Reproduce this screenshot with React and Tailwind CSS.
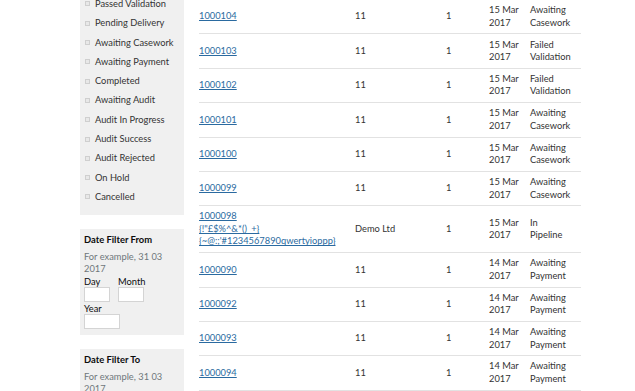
import React from 'react';

const statuses = [
  'Failed Validation',
  'Passed Validation',
  'Pending Delivery',
  'Awaiting Casework',
  'Awaiting Payment',
  'Completed',
  'Awaiting Audit',
  'Audit In Progress',
  'Audit Success',
  'Audit Rejected',
  'On Hold',
  'Cancelled',
];

const rows = [
  { id: ['1000104'], org: '11', qty: '1', date: ['15 Mar', '2017'], status: ['Awaiting', 'Casework'] },
  { id: ['1000103'], org: '11', qty: '1', date: ['15 Mar', '2017'], status: ['Failed', 'Validation'] },
  { id: ['1000102'], org: '11', qty: '1', date: ['15 Mar', '2017'], status: ['Failed', 'Validation'] },
  { id: ['1000101'], org: '11', qty: '1', date: ['15 Mar', '2017'], status: ['Awaiting', 'Casework'] },
  { id: ['1000100'], org: '11', qty: '1', date: ['15 Mar', '2017'], status: ['Awaiting', 'Casework'] },
  { id: ['1000099'], org: '11', qty: '1', date: ['15 Mar', '2017'], status: ['Awaiting', 'Casework'] },
  {
    id: ['1000098', '{!"£$%^&*()_+}', "{~@:;'#1234567890qwertyioppp}"],
    org: 'Demo Ltd',
    qty: '1',
    date: ['15 Mar', '2017'],
    status: ['In', 'Pipeline'],
  },
  { id: ['1000090'], org: '11', qty: '1', date: ['14 Mar', '2017'], status: ['Awaiting', 'Payment'] },
  { id: ['1000092'], org: '11', qty: '1', date: ['14 Mar', '2017'], status: ['Awaiting', 'Payment'] },
  { id: ['1000093'], org: '11', qty: '1', date: ['14 Mar', '2017'], status: ['Awaiting', 'Payment'] },
  { id: ['1000094'], org: '11', qty: '1', date: ['14 Mar', '2017'], status: ['Awaiting', 'Payment'] },
];

const Lines = ({ lines }) =>
  lines.map((l, i) => (
    <span key={i} className="block">
      {l}
    </span>
  ));

const DateFilter = ({ title }) => (
  <div className="bg-[#f0f0f0] px-[4px] pt-[4px] pb-[6px]">
    <h3 className="font-bold text-[9.4px] leading-[13px] text-[#0b0c0c] mb-[5px]">{title}</h3>
    <p className="text-[9.3px] leading-[12.5px] text-[#6f777b]">
      For example, 31 03
      <br />
      2017
    </p>
    <div className="flex gap-[8px]">
      <label className="flex flex-col">
        <span className="text-[9.3px] leading-[11px] text-[#0b0c0c]">Day</span>
        <span className="block w-[26px] h-[15px] bg-white border border-[#d4d4d4]" />
      </label>
      <label className="flex flex-col">
        <span className="text-[9.3px] leading-[11px] text-[#0b0c0c]">Month</span>
        <span className="block w-[26px] h-[15px] bg-white border border-[#d4d4d4]" />
      </label>
    </div>
    <label className="flex flex-col mt-[1px]">
      <span className="text-[9.3px] leading-[11px] text-[#0b0c0c]">Year</span>
      <span className="block w-[36px] h-[15px] bg-white border border-[#d4d4d4]" />
    </label>
  </div>
);

export default function App() {
  return (
    <div
      className="h-[391px] overflow-hidden bg-white text-[#0b0c0c]"
      style={{ fontFamily: 'Lato, "Noto Sans", sans-serif' }}
    >
      <div className="flex items-start gap-[15px] pl-[80px]">
        {/* Filters */}
        <aside className="w-[104px] shrink-0 flex flex-col gap-[14px] mt-[-25px]">
          <ul className="bg-[#f0f0f0] pb-[8px]">
            {statuses.map((s) => (
              <li key={s} className="flex items-center h-[19.3px] pl-[5px]">
                <span className="w-[5px] h-[5px] border border-[#cfcfcf] bg-[#e8e8e8] mr-[5px]" />
                <span className="text-[9.3px] whitespace-nowrap text-[#333]">{s}</span>
              </li>
            ))}
          </ul>
          <DateFilter title="Date Filter From" />
          <DateFilter title="Date Filter To" />
        </aside>

        {/* Results */}
        <table className="table-fixed w-[382px] border-collapse text-[9.3px] leading-[12.5px]">
          <colgroup>
            <col className="w-[156px]" />
            <col className="w-[91px]" />
            <col className="w-[43px]" />
            <col className="w-[41px]" />
            <col className="w-[51px]" />
          </colgroup>
          <tbody>
            {rows.map((r) => (
              <tr key={r.id[0]} className="border-b border-[#e2e2e2]">
                <td className="py-[4.2px] align-middle">
                  <a href="#" className="block text-[#2a6aa0] underline">
                    <Lines lines={r.id} />
                  </a>
                </td>
                <td className="py-[4.2px] align-middle text-[#333]">{r.org}</td>
                <td className="py-[4.2px] align-middle text-[#333]">{r.qty}</td>
                <td className="py-[4.2px] align-middle text-[#333]">
                  <Lines lines={r.date} />
                </td>
                <td className="py-[4.2px] align-middle text-[#333]">
                  <Lines lines={r.status} />
                </td>
              </tr>
            ))}
          </tbody>
        </table>
      </div>
    </div>
  );
}
